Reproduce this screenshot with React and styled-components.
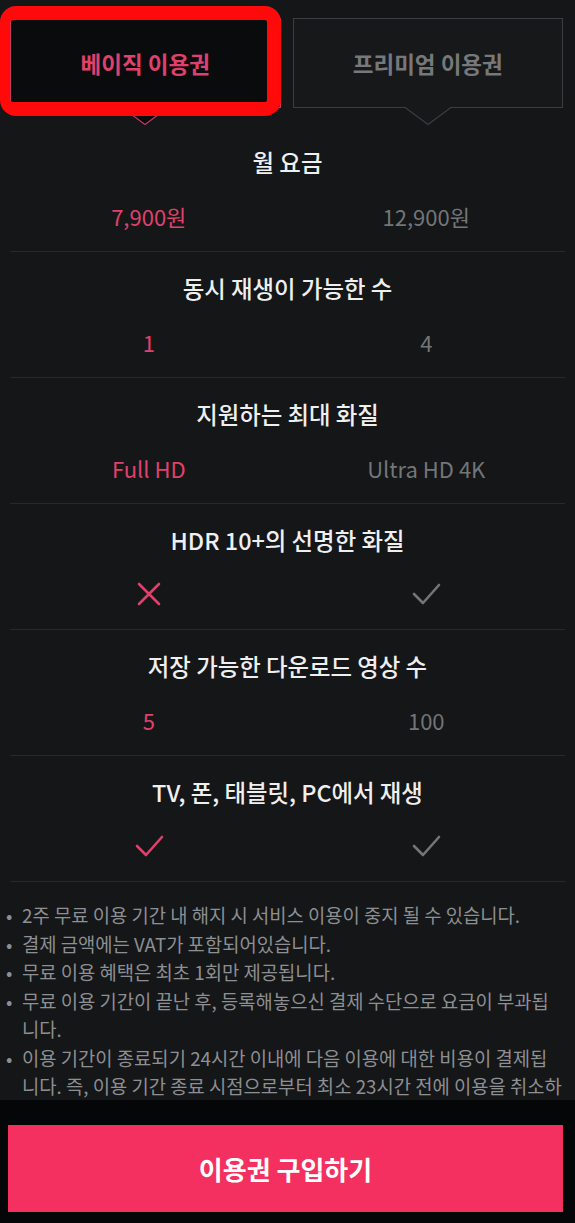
import React from 'react';
import styled, { createGlobalStyle } from 'styled-components';

const GlobalStyle = createGlobalStyle`
  body {
    margin: 0;
    background: #141618;
    font-family: "Noto Sans CJK KR", "Noto Sans", sans-serif;
  }
  * { box-sizing: border-box; }
`

const PINK = '#e0416c'
const GRAY = '#737577'

const plans = [
  { title: '월 요금', basic: '7,900원', premium: '12,900원' },
  { title: '동시 재생이 가능한 수', basic: '1', premium: '4' },
  { title: '지원하는 최대 화질', basic: 'Full HD', premium: 'Ultra HD 4K' },
  { title: 'HDR 10+의 선명한 화질', basic: 'no', premium: 'yes' },
  { title: '저장 가능한 다운로드 영상 수', basic: '5', premium: '100' },
  { title: 'TV, 폰, 태블릿, PC에서 재생', basic: 'yes', premium: 'yes' },
]

const notes = [
  '2주 무료 이용 기간 내 해지 시 서비스 이용이 중지 될 수 있습니다.',
  '결제 금액에는 VAT가 포함되어있습니다.',
  '무료 이용 혜택은 최초 1회만 제공됩니다.',
  '무료 이용 기간이 끝난 후, 등록해놓으신 결제 수단으로 요금이 부과됩니다.',
  '이용 기간이 종료되기 24시간 이내에 다음 이용에 대한 비용이 결제됩니다. 즉, 이용 기간 종료 시점으로부터 최소 23시간 전에 이용을 취소하셔야 다음 이용에 대한 비용이 결제되지 않습니다.',
  '이용권은 언제든지 해지할 수 있으며, 해지 시 남은 기간까지 이용 가능합니다.',
]

const CheckIcon = ({ color }) => (
  <svg width="30" height="26" viewBox="0 0 30 26" fill="none">
    <polyline points="3,13 12,22 28,4" stroke={color} strokeWidth="2.6" strokeLinecap="round" strokeLinejoin="round" />
  </svg>
)

const CrossIcon = ({ color }) => (
  <svg width="26" height="26" viewBox="0 0 26 26" fill="none">
    <path d="M3 3 L23 23 M23 3 L3 23" stroke={color} strokeWidth="2.6" strokeLinecap="round" />
  </svg>
)

const Pointer = ({ fill, stroke }) => (
  <PointerSvg width="46" height="19" viewBox="0 0 46 19">
    <polygon points="0,0 23,17.5 46,0" fill={fill} />
    <polyline points="0,0.5 23,17.5 46,0.5" fill="none" stroke={stroke} strokeWidth="1.2" />
  </PointerSvg>
)

const renderValue = (value, color) => {
  if (value === 'yes') return <CheckIcon color={color} />
  if (value === 'no') return <CrossIcon color={color} />
  return value
}

const App = () => {
  return (
    <Page>
      <GlobalStyle />
      <Tabs>
        <Tab $active>
          베이직 이용권
          <Pointer fill="#0a0b0d" stroke="#c7375f" />
          <Highlight />
        </Tab>
        <Tab>
          프리미엄 이용권
          <Pointer fill="#16181a" stroke="#3b3e41" />
        </Tab>
      </Tabs>

      <Compare>
        {plans.map((row) => (
          <Row key={row.title}>
            <RowTitle>{row.title}</RowTitle>
            <Values>
              <Value $color={PINK}>{renderValue(row.basic, PINK)}</Value>
              <Value $color={GRAY}>{renderValue(row.premium, GRAY)}</Value>
            </Values>
          </Row>
        ))}
      </Compare>

      <Notes>
        {notes.map((n) => (
          <Note key={n}>{n}</Note>
        ))}
      </Notes>

      <BottomBar>
        <BuyButton>이용권 구입하기</BuyButton>
      </BottomBar>
    </Page>
  )
}
export default App;


const Page = styled.div`
background:#141618;
min-height:100vh;
padding-bottom:140px;
`
const Tabs = styled.div`
display:grid;
grid-template-columns:1fr 1fr;
gap:12px;
padding:18px 12px 0 10px;
margin-bottom:18px;
`
const Tab = styled.div`
position:relative;
height:90px;
display:flex;
align-items:center;
justify-content:center;
font-size:22.5px;
font-weight:700;
color:${p => p.$active ? PINK : '#76787b'};
background:${p => p.$active ? '#0a0b0d' : '#16181a'};
border:1px solid ${p => p.$active ? '#c7375f' : '#3b3e41'};
`
const PointerSvg = styled.svg`
position:absolute;
left:50%;
bottom:-19px;
transform:translateX(-50%);
`
const Highlight = styled.span`
position:absolute;
left:-11px;
top:-13px;
right:-1px;
bottom:-9px;
border:solid #ff0a0a;
border-width:14px 14px 14px 10px;
border-radius:16px;
pointer-events:none;
z-index:2;
`
const Compare = styled.div`
padding:0 10px;
`
const Row = styled.section`
display:flex;
flex-direction:column;
gap:26px;
padding:22px 0 21px;
border-bottom:1px solid #27292c;
`
const RowTitle = styled.h2`
margin:0;
text-align:center;
font-size:23.4px;
font-weight:500;
line-height:28px;
color:#efefef;
`
const Values = styled.div`
display:grid;
grid-template-columns:1fr 1fr;
height:28px;
`
const Value = styled.div`
display:flex;
align-items:center;
justify-content:center;
font-size:22px;
line-height:28px;
color:${p => p.$color};
`
const Notes = styled.ul`
margin:0;
padding:19px 12px 0 6px;
list-style:none;
`
const Note = styled.li`
position:relative;
padding-left:16px;
font-size:18.8px;
line-height:28.5px;
color:#8d8f92;
&::before{
  content:'•';
  position:absolute;
  left:0;
  top:0;
}
`
const BottomBar = styled.div`
position:fixed;
left:0;
right:0;
bottom:0;
height:123px;
padding:25px 12px 11px 8px;
background:#050607;
`
const BuyButton = styled.button`
width:100%;
height:87px;
border:none;
background:#f3305f;
color:#ffffff;
font-family:inherit;
font-size:26px;
font-weight:700;
`
